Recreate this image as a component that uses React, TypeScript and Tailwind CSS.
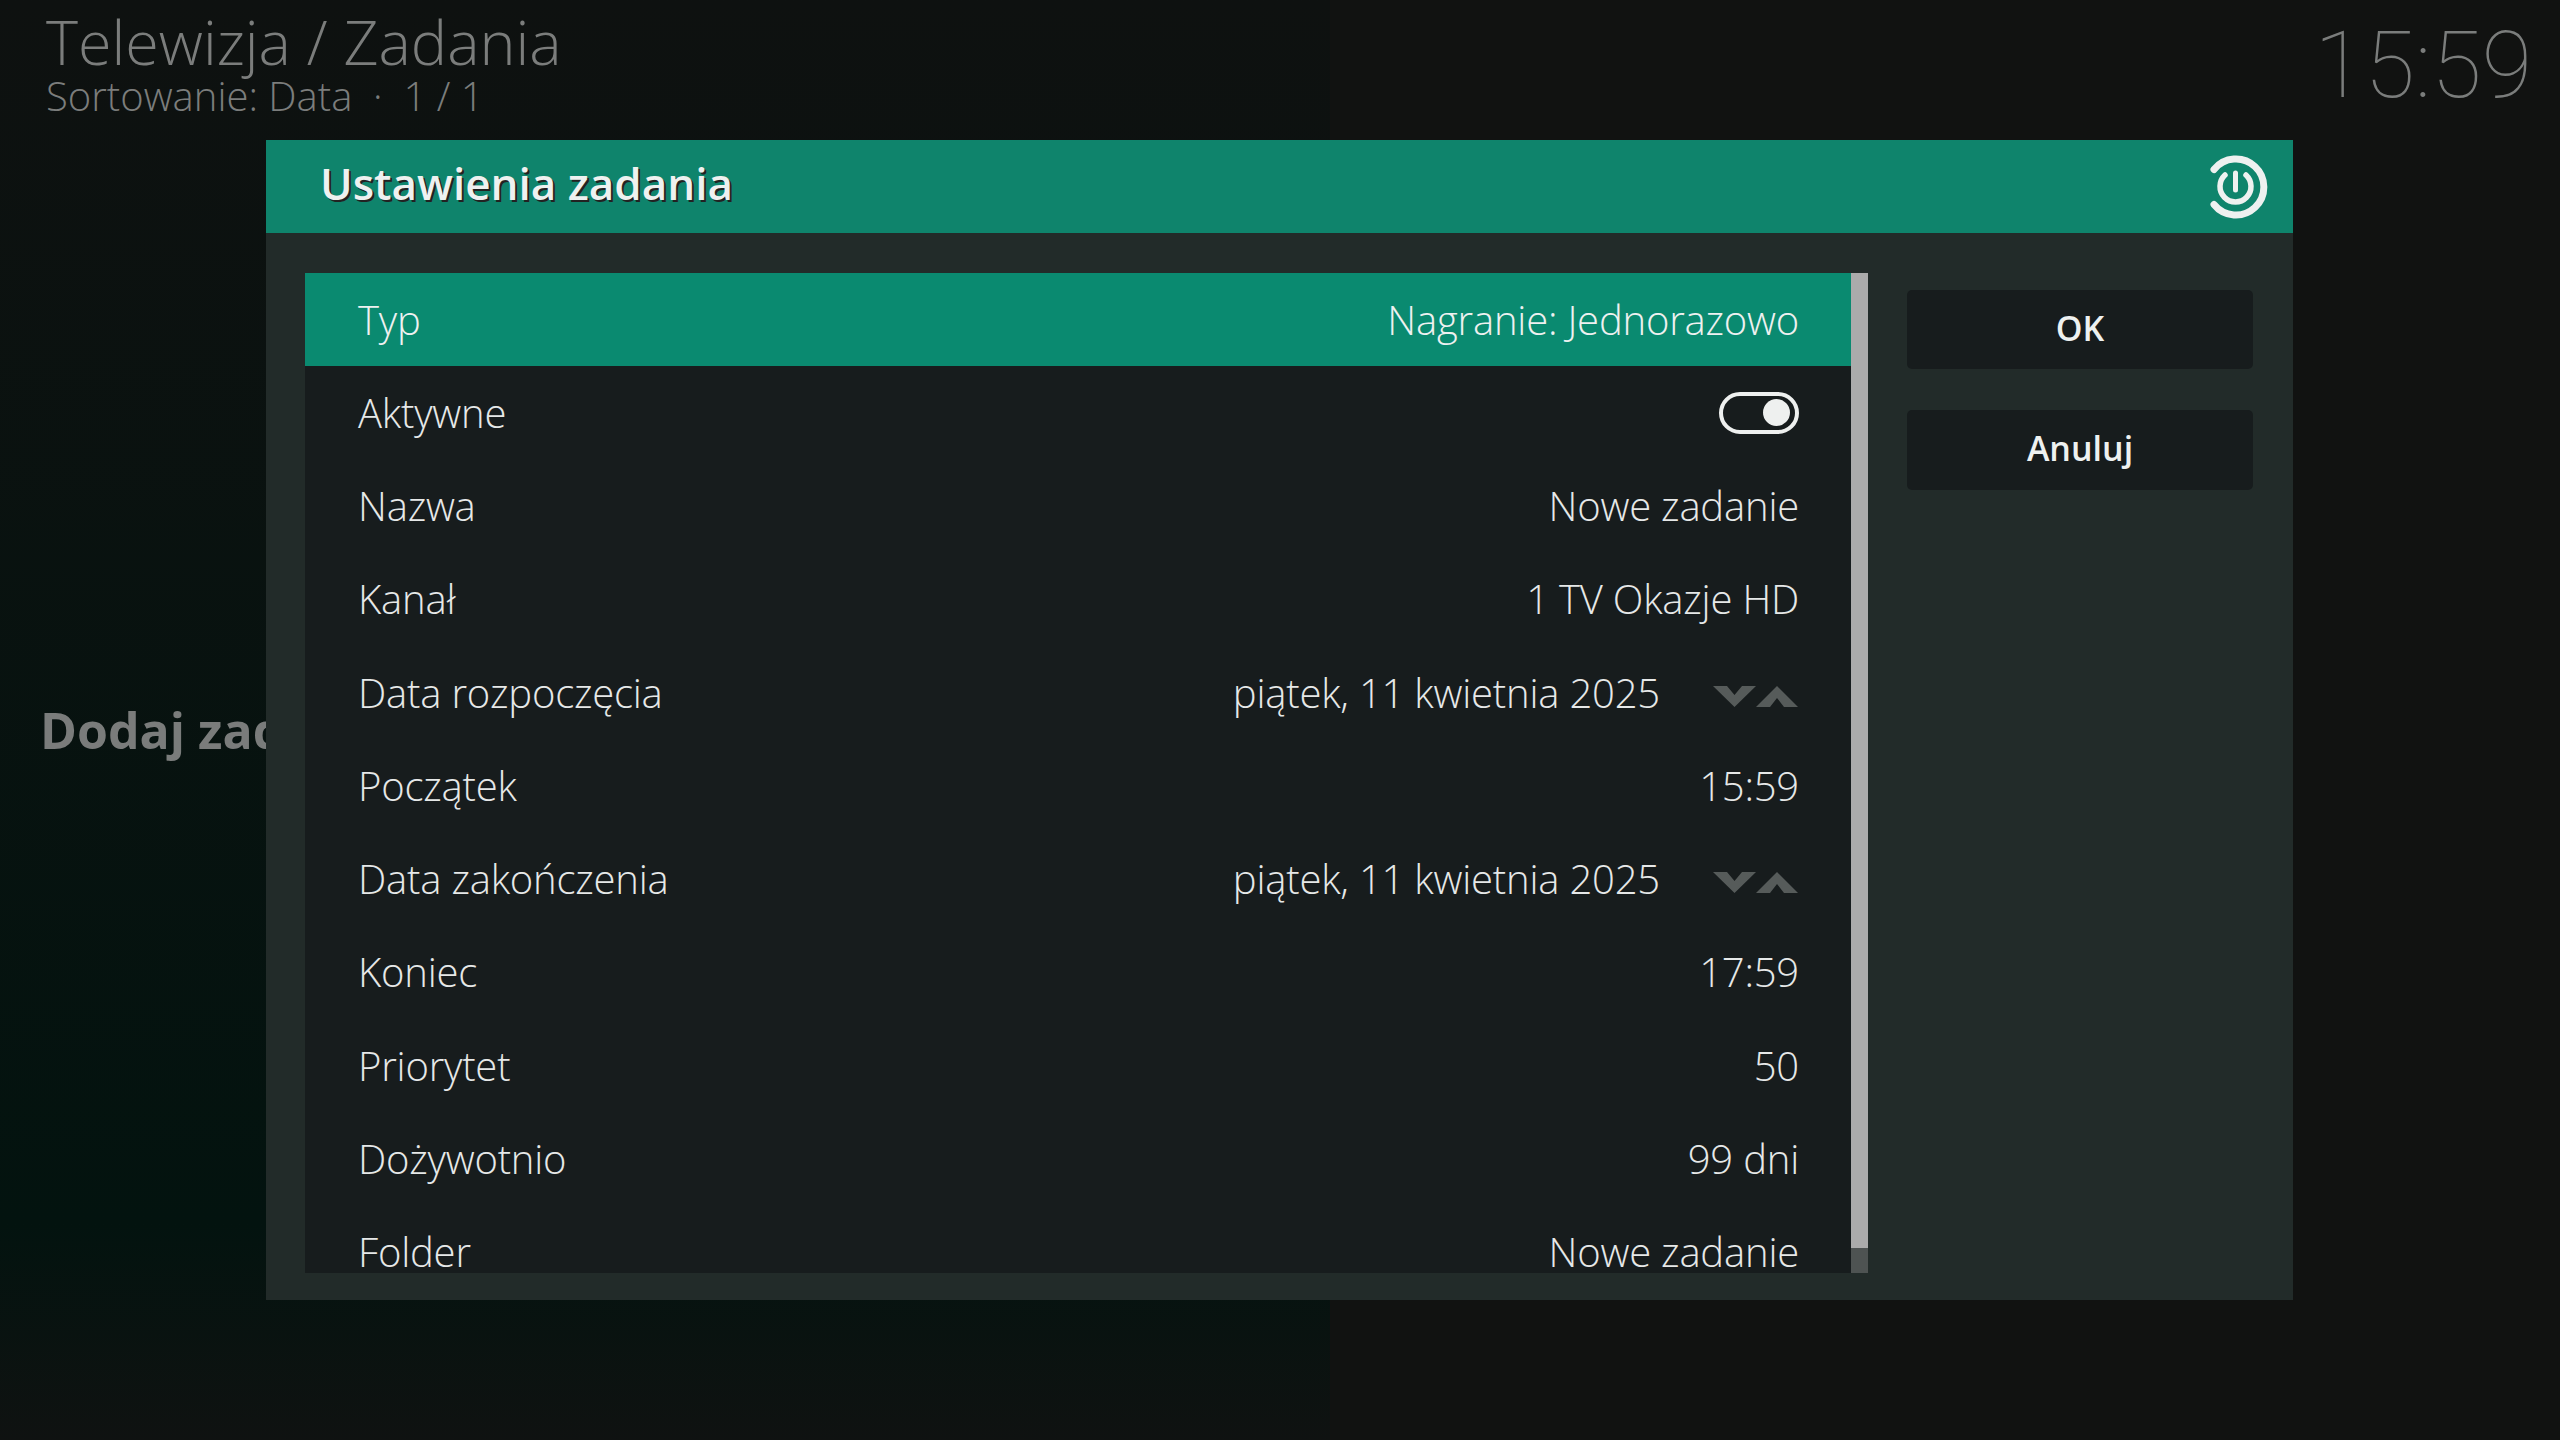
const rows = [
  { label: "Aktywne", toggle: true },
  { label: "Nazwa", value: "Nowe zadanie" },
  { label: "Kanał", value: "1 TV Okazje HD" },
  { label: "Data rozpoczęcia", value: "piątek, 11 kwietnia 2025", spin: true },
  { label: "Początek", value: "15:59" },
  { label: "Data zakończenia", value: "piątek, 11 kwietnia 2025", spin: true },
  { label: "Koniec", value: "17:59" },
  { label: "Priorytet", value: "50" },
  { label: "Dożywotnio", value: "99 dni" },
  { label: "Folder", value: "Nowe zadanie" },
];

const PowerIcon = () => (
  <svg width="60" height="66" viewBox="0 0 60 66" fill="none" stroke="#eef1f0" strokeLinecap="round">
    <path d="M6 15.5A28 28 0 1 1 6 50.5" strokeWidth="7" />
    <path d="M17 21A15.5 15.5 0 1 0 38 21" strokeWidth="5.5" />
    <path d="M27.5 19V36" strokeWidth="5" />
  </svg>
);

const Spinner = () => (
  <svg className="mt-[6px]" width="86" height="24" viewBox="0 0 86 24" fill="#565b5a">
    <path d="M0 2H14L21.5 11L29 2H43L21.5 23Z" />
    <path d="M43 23L64 2L85 23H71L64 14L57 23Z" />
  </svg>
);

const Toggle = () => (
  <div className="flex h-[42px] w-[80px] items-center justify-end rounded-full border-[4px] border-[#eef0ef] pr-[5px]">
    <div className="h-[27px] w-[27px] rounded-full bg-[#eef0ef]" />
  </div>
);

export default function App() {
  return (
    <div className="relative h-[1440px] w-[2560px] overflow-hidden bg-[#111211] font-['Open_Sans',sans-serif]">
      <div className="absolute inset-y-0 left-0 w-[1330px] bg-gradient-to-b from-[#0e1110] via-[#03130f] via-85% to-[#0f1211]" />

      <div className="absolute left-[46px] top-[10px] text-[#7b7d7c]">
        <div className="text-[61px] font-light leading-[64px]">Telewizja / Zadania</div>
        <div className="text-[40px] font-light leading-[44px]">Sortowanie: Data&nbsp; ·&nbsp; 1 / 1</div>
      </div>
      <div className="absolute right-[28px] top-[11px] font-['Roboto',sans-serif] text-[92px] font-thin leading-[110px] text-[#7b7d7c]">15:59</div>
      <div className="absolute left-[40px] top-[698px] text-[50px] font-bold leading-[64px] text-[#7a7c7b]">Dodaj zadanie</div>

      <div className="absolute left-[266px] top-[140px] flex h-[1160px] w-[2027px] flex-col bg-[#222b29]">
        <div className="flex h-[93px] items-center justify-between bg-[#0f846c] pl-[54px] pr-[25px]">
          <div className="mt-[-7px] text-[44px] font-semibold text-[#eef1f0] [text-shadow:2px_2px_0_#222]">Ustawienia zadania</div>
          <PowerIcon />
        </div>
        <div className="flex gap-[39px] pl-[39px] pt-[40px]">
          <div className="flex h-[1000px] w-[1563px]">
            <div className="w-[1547px] overflow-hidden bg-[#171c1d]">
              <div className="flex h-[93px] items-center justify-between bg-[#0a8a70] px-[53px] text-[40px] font-light tracking-[-0.2px] text-[#eef1f0]">
                <span>Typ</span>
                <span>Nagranie: Jednorazowo</span>
              </div>
              {rows.map((row) => (
                <div key={row.label} className="flex h-[93.3px] items-center justify-between px-[53px] text-[40px] font-light tracking-[-0.2px] text-[#e6e8e8]">
                  <span>{row.label}</span>
                  <div className="flex items-center gap-[53px]">
                    {row.value && <span>{row.value}</span>}
                    {row.spin && <Spinner />}
                    {row.toggle && <Toggle />}
                  </div>
                </div>
              ))}
            </div>
            <div className="ml-[-1px] flex w-[17px] flex-col bg-[#4e5352]">
              <div className="h-[975px] bg-[#ababab]" />
            </div>
          </div>
          <div className="flex w-[346px] flex-col gap-[41px] pt-[17px]">
            <div className="flex h-[79px] items-center justify-center rounded-[5px] bg-[#171c1d] pb-[2px] text-[34px] font-semibold text-[#eef1f0]">OK</div>
            <div className="flex h-[80px] items-center justify-center rounded-[5px] bg-[#171c1d] pb-[4px] text-[34px] font-semibold text-[#eef1f0]">Anuluj</div>
          </div>
        </div>
      </div>
    </div>
  );
}
